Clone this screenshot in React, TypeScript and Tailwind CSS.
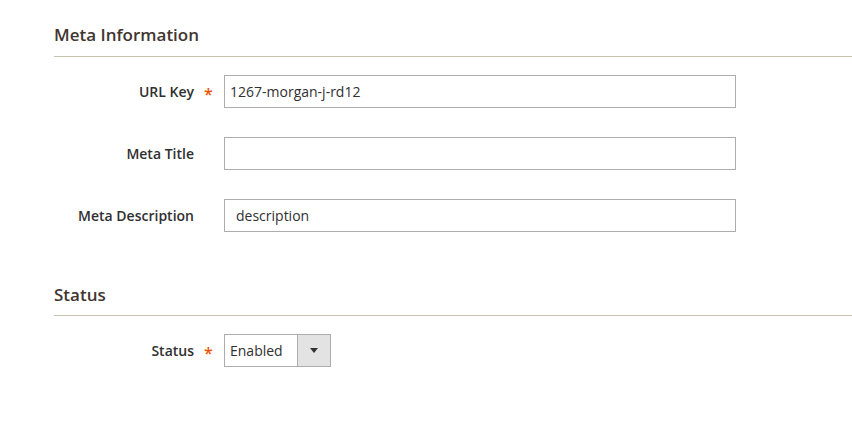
import React from "react";

function Row({ label, required, value, mt, pad }: { label: string; required?: boolean; value: string; mt: string; pad: string }) {
  return (
    <div className={`flex items-center ${mt}`}>
      <div className="relative w-[170px] shrink-0 pr-[30px] text-right text-[14px] font-semibold text-[#303030]">
        {label}
        {required && (
          <span className="absolute left-[150px] top-[1px] text-[16px] text-[#eb5202]">*</span>
        )}
      </div>
      <input
        readOnly
        value={value}
        className={`h-[33px] w-[512px] border border-[#adadad] bg-white pr-[5px] ${pad} text-[14px] text-[#303030] outline-none`}
      />
    </div>
  );
}

export default function App() {
  return (
    <div className="h-[444px] w-[852px] bg-white pl-[54px] font-['Open_Sans',sans-serif]">
      <div className="pt-[24px]">
        <div className="border-b border-[#cac3b4] pb-[10px] text-[17px] leading-[22px] font-semibold text-[#41362f]">
          Meta Information
        </div>
      </div>
      <Row label="URL Key" required value="1267-morgan-j-rd12" mt="mt-[18px]" pad="pl-[5px]" />
      <Row label="Meta Title" value="" mt="mt-[29px]" pad="pl-[5px]" />
      <Row label="Meta Description" value="description" mt="mt-[29px]" pad="pl-[11px]" />
      <div className="mt-[52px]">
        <div className="border-b border-[#cac3b4] pb-[9px] text-[17px] leading-[22px] font-semibold text-[#41362f]">
          Status
        </div>
      </div>
      <div className="mt-[18px] flex items-center">
        <div className="relative w-[170px] shrink-0 pr-[30px] text-right text-[14px] font-semibold text-[#303030]">
          Status
          <span className="absolute left-[150px] top-[1px] text-[16px] text-[#eb5202]">*</span>
        </div>
        <div className="flex h-[33px] w-[107px] border border-[#adadad] bg-white">
          <div className="flex flex-1 items-center pl-[5px] text-[14px] text-[#303030]">Enabled</div>
          <div className="flex w-[33px] items-center justify-center border-l border-[#adadad] bg-[#e3e3e3]">
            <svg width="8" height="5" viewBox="0 0 8 5">
              <path d="M0 0 L8 0 L4 5 Z" fill="#333" />
            </svg>
          </div>
        </div>
      </div>
    </div>
  );
}
